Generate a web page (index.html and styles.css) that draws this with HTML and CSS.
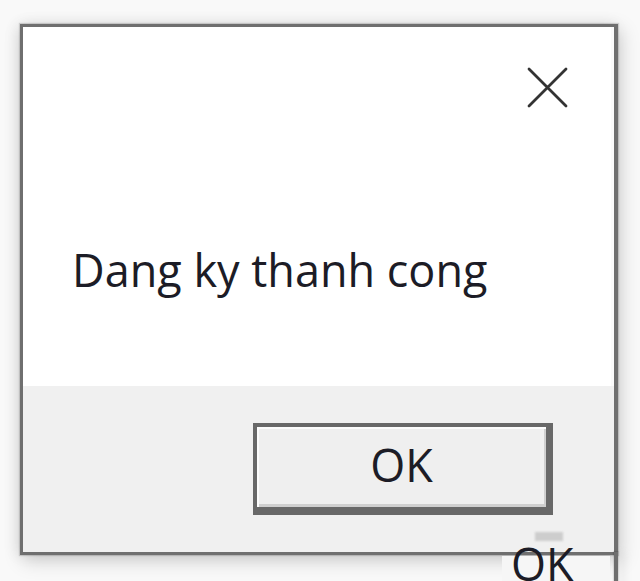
FILE: index.html
```html
<!DOCTYPE html>
<html lang="vi">
<head>
<meta charset="utf-8">
<title>Dang ky</title>
<link rel="stylesheet" href="styles.css">
</head>
<body>
<div class="stage">
  <div class="dialog">
    <div class="content">
      <div class="close-row">
        <svg class="close" viewBox="0 0 41 41" width="41" height="41" aria-label="Close">
          <path d="M2 2 L39 39 M39 2 L2 39" stroke="#333333" stroke-width="2.8" stroke-linecap="round" fill="none"/>
        </svg>
      </div>
      <p class="message">Dang ky thanh cong</p>
    </div>
    <div class="footer">
      <button class="ok-btn" type="button">OK</button>
    </div>
  </div>
  <div class="ghost"><span class="ghost-bar"></span><span class="ghost-text">OK</span></div>
</div>
</body>
</html>
```
FILE: styles.css
```css
html, body {
  margin: 0;
  padding: 0;
}
body {
  width: 640px;
  height: 581px;
  overflow: hidden;
  background: #f9f9f9;
  font-family: "Open Sans", "Noto Sans", "DejaVu Sans", sans-serif;
}
.stage {
  position: relative;
  width: 640px;
  height: 581px;
  padding: 24px 0 0 20px;
  box-sizing: border-box;
}
.dialog {
  position: relative;
  box-sizing: border-box;
  width: 598px;
  height: 531px;
  border: 3px solid #6f6f6f;
  border-right-width: 4px;
  background: #ffffff;
  display: flex;
  flex-direction: column;
  box-shadow: 0 0 1px 1px rgba(0,0,0,0.14), 3px 6px 18px rgba(0,0,0,0.17), -3px 0 14px rgba(0,0,0,0.08);
}
.dialog::after {
  content: "";
  position: absolute;
  right: -4px;
  top: 100%;
  width: 4px;
  height: 40px;
  background: #6f6f6f;
  box-shadow: 0 0 1px 1px rgba(0,0,0,0.1), 6px 0 10px rgba(0,0,0,0.1);
}
.content {
  height: 359px;
  background: #ffffff;
  box-sizing: border-box;
  padding-left: 49px;
  box-shadow: inset -3px 0 0 #fafafa;
}
.close-row {
  display: flex;
  justify-content: flex-end;
  padding: 40px 46px 0 0;
}
.close {
  display: block;
}
.message {
  margin: 139px 0 0 0;
  font-size: 45px;
  font-weight: 500;
  line-height: 45px;
  color: #1c1c26;
  white-space: nowrap;
}
.footer {
  flex: 1;
  background: #f0f0f0;
  display: flex;
  justify-content: flex-end;
  align-items: flex-start;
  padding: 37px 61px 0 0;
}
.ok-btn {
  box-sizing: border-box;
  width: 300px;
  height: 92px;
  margin: 0;
  padding: 0 0 6px 0;
  background: #efefef;
  border-style: solid;
  border-color: #686868;
  border-width: 4px 7px 8px 4px;
  box-shadow: inset 2px 2px 0 #fcfcfc, inset -2px -3px 0 #cfcfcf;
  font-family: "Open Sans", "Noto Sans", "DejaVu Sans", sans-serif;
  font-size: 45px;
  font-weight: 500;
  line-height: 45px;
  color: #1c1c26;
  display: flex;
  align-items: center;
  justify-content: center;
}
.ghost {
  position: absolute;
  left: 502px;
  top: 530px;
  width: 108px;
  height: 51px;
  background: linear-gradient(to bottom, transparent 0, transparent 26px, #f6f6f6 26px);
}
.ghost-bar {
  position: absolute;
  left: 33px;
  top: 2px;
  width: 28px;
  height: 9px;
  background: #cdcdcd;
  filter: blur(1px);
}
.ghost-text {
  position: absolute;
  left: 9px;
  top: 11px;
  font-size: 45px;
  font-weight: 500;
  line-height: 45px;
  color: #1c1c26;
}
```
